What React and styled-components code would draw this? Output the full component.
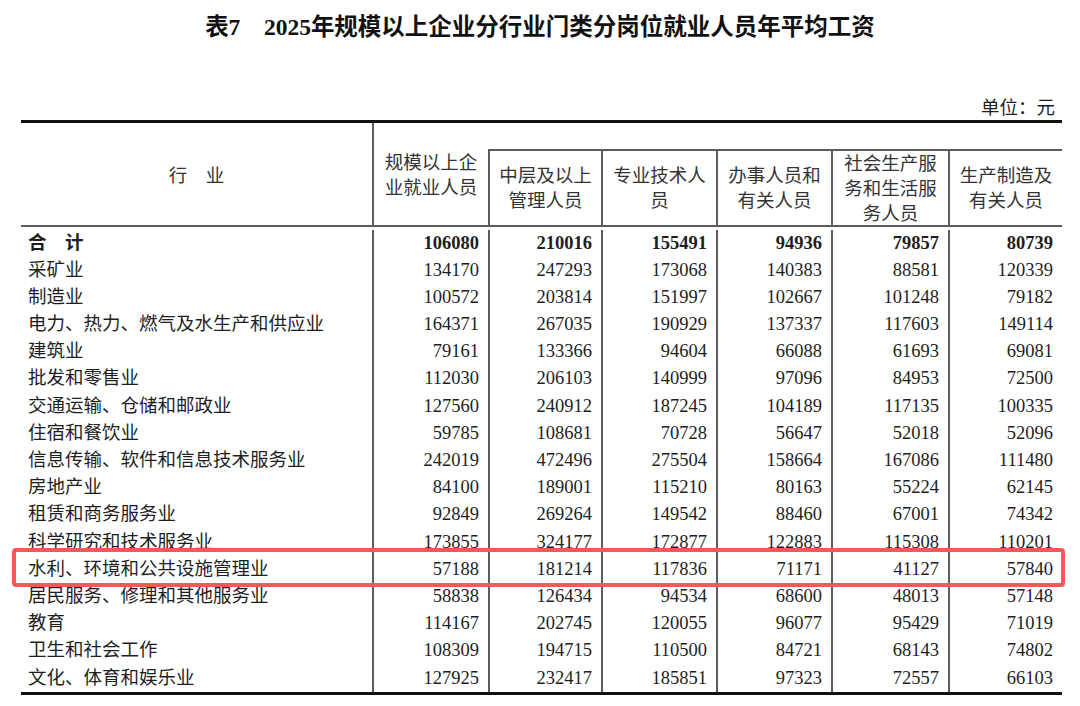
import React from 'react'
import styled, { createGlobalStyle } from 'styled-components'

const Global = createGlobalStyle`
  body {
    margin: 0;
    background: #fff;
    font-family: "Liberation Serif", "Noto Sans CJK SC", serif;
    color: #1e1e1e;
  }
`

const COLS = '351px 116px 113px 115px 115px 117px 114px'
const LINE = '2px solid #5c5c5c'

const Page = styled.div`
  width: 1080px;
  padding-top: 12px;
`

const Title = styled.h1`
  margin: 0;
  height: 30px;
  line-height: 30px;
  text-align: center;
  font-size: 23.5px;
  font-weight: bold;
  color: #111;
`

const Unit = styled.div`
  margin: 54px 25px 0 0;
  height: 24px;
  line-height: 24px;
  text-align: right;
  font-size: 18.5px;
`

const Table = styled.div`
  margin-left: 21px;
  width: 1041px;
  border-top: 3px solid #111;
  border-bottom: 3px solid #111;
  font-size: 18.5px;
`

const Head = styled.div`
  display: grid;
  grid-template-columns: ${COLS};
  grid-template-rows: 28px 74px;
  border-bottom: ${LINE};
`

const HeadCell = styled.div`
  grid-row: ${p => p.$span ? '1 / 3' : '2'};
  display: flex;
  align-items: center;
  justify-content: center;
  text-align: center;
  line-height: 25px;
  padding-top: ${p => p.$span ? '4px' : '2px'};
  border-left: ${p => p.$first ? 'none' : LINE};
  color: #333;
`

const Group = styled.div`
  grid-row: 1;
  grid-column: 3 / 8;
  border-bottom: ${LINE};
`

const Body = styled.div`
  padding-top: 2.5px;
`

const Row = styled.div`
  display: grid;
  grid-template-columns: ${COLS};
  height: 27.2px;
  line-height: 27.2px;
  font-weight: ${p => p.$total ? 'bold' : 'normal'};
  position: relative;

  ${p => p.$mark && `
    &::after {
      content: "";
      position: absolute;
      top: -8px;
      bottom: -4px;
      left: -9px;
      right: -3px;
      border: 4px solid #f4585a;
      border-radius: 4px;
      z-index: 1;
    }
  `}
`

const Name = styled.div`
  padding-left: 7px;
  white-space: nowrap;
`

const Num = styled.div`
  text-align: right;
  padding-right: 9px;
  border-left: ${LINE};
`

const rows = [
  ['合\u3000计', 106080, 210016, 155491, 94936, 79857, 80739],
  ['采矿业', 134170, 247293, 173068, 140383, 88581, 120339],
  ['制造业', 100572, 203814, 151997, 102667, 101248, 79182],
  ['电力、热力、燃气及水生产和供应业', 164371, 267035, 190929, 137337, 117603, 149114],
  ['建筑业', 79161, 133366, 94604, 66088, 61693, 69081],
  ['批发和零售业', 112030, 206103, 140999, 97096, 84953, 72500],
  ['交通运输、仓储和邮政业', 127560, 240912, 187245, 104189, 117135, 100335],
  ['住宿和餐饮业', 59785, 108681, 70728, 56647, 52018, 52096],
  ['信息传输、软件和信息技术服务业', 242019, 472496, 275504, 158664, 167086, 111480],
  ['房地产业', 84100, 189001, 115210, 80163, 55224, 62145],
  ['租赁和商务服务业', 92849, 269264, 149542, 88460, 67001, 74342],
  ['科学研究和技术服务业', 173855, 324177, 172877, 122883, 115308, 110201],
  ['水利、环境和公共设施管理业', 57188, 181214, 117836, 71171, 41127, 57840],
  ['居民服务、修理和其他服务业', 58838, 126434, 94534, 68600, 48013, 57148],
  ['教育', 114167, 202745, 120055, 96077, 95429, 71019],
  ['卫生和社会工作', 108309, 194715, 110500, 84721, 68143, 74802],
  ['文化、体育和娱乐业', 127925, 232417, 185851, 97323, 72557, 66103],
]

const subHeads = [
  ['中层及以上', '管理人员'],
  ['专业技术人', '员'],
  ['办事人员和', '有关人员'],
  ['社会生产服', '务和生活服', '务人员'],
  ['生产制造及', '有关人员'],
]

const lines = parts => parts.map((t, i) => (
  <React.Fragment key={i}>{i > 0 && <br />}{t}</React.Fragment>
))

export default function App() {
  return (
    <Page>
      <Global />
      <Title>表7{'\u3000'}2025年规模以上企业分行业门类分岗位就业人员年平均工资</Title>
      <Unit>单位：元</Unit>
      <Table>
        <Head>
          <HeadCell $span $first>行{'\u3000'}业</HeadCell>
          <HeadCell $span>{lines(['规模以上企', '业就业人员'])}</HeadCell>
          <Group />
          {subHeads.map((h, i) => (
            <HeadCell key={i}>{lines(h)}</HeadCell>
          ))}
        </Head>
        <Body>
          {rows.map((r, i) => (
            <Row key={r[0]} $total={i === 0} $mark={i === 12}>
              <Name>{r[0]}</Name>
              {r.slice(1).map((v, j) => <Num key={j}>{v}</Num>)}
            </Row>
          ))}
        </Body>
      </Table>
    </Page>
  )
}
